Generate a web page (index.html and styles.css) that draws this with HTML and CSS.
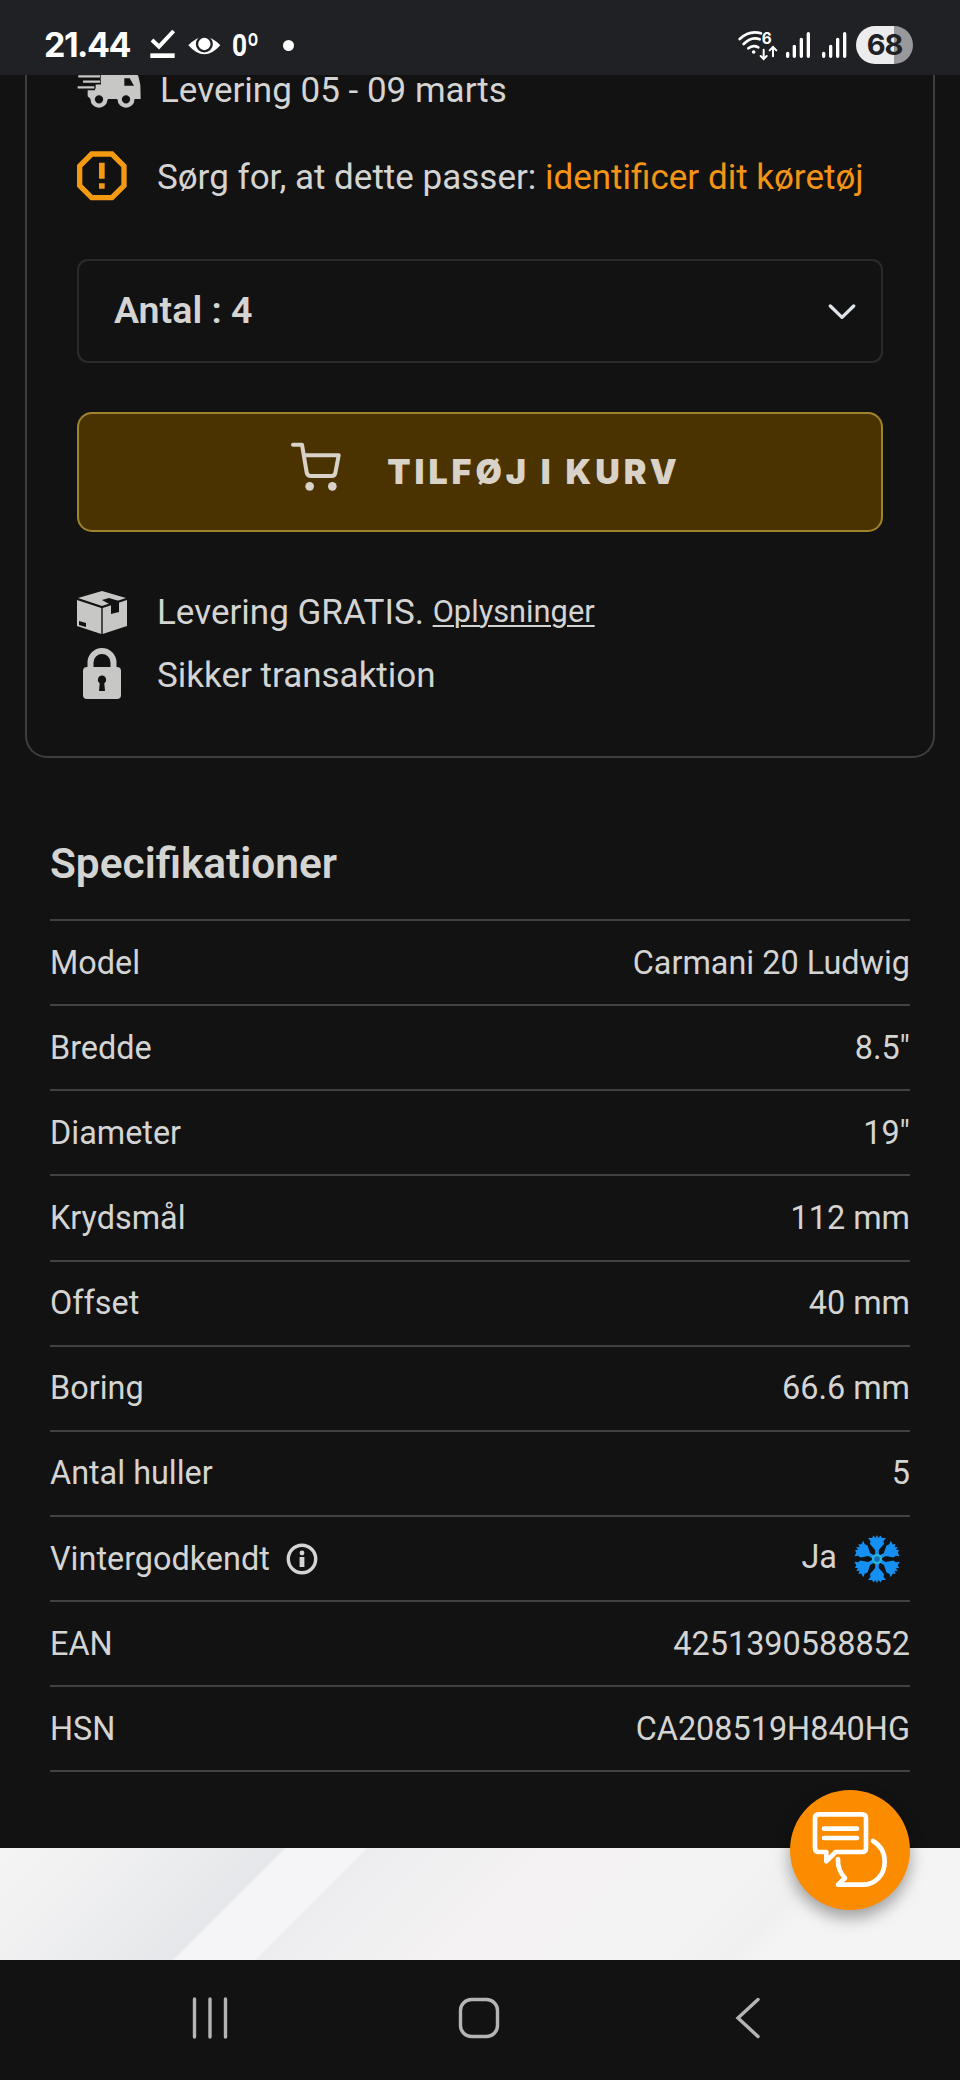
FILE: index.html
```html
<!DOCTYPE html>
<html lang="da">
<head>
<meta charset="utf-8">
<title>Carmani 20 Ludwig</title>
<link rel="stylesheet" href="styles.css">
</head>
<body>
<header class="status">
  <span class="clock">21.44</span>
  <svg class="st-check" width="26" height="32" viewBox="450 93 78 96" fill="none"><path d="M456 126L477 146L521 99" stroke="#fff" stroke-width="12"/><rect x="451" y="166" width="73" height="14" fill="#fff"/></svg>
  <svg class="st-eye" width="33" height="21" viewBox="563 105 99 63"><path d="M564 136Q612 84 660 136Q612 190 564 136Z" fill="#fff"/><circle cx="612" cy="132" r="22" fill="none" stroke="#202124" stroke-width="7"/></svg>
  <span class="temp">0º</span>
  <span class="dot"></span>
  <svg class="st-net" width="112" height="34" viewBox="770 84 336 102" fill="none" stroke="#fff" stroke-linecap="round">
    <g stroke-width="8"><path d="M778 117Q808 89 842 100"/><path d="M790 132Q814 108 838 118"/><path d="M804 145Q818 133 834 142"/></g>
    <circle cx="820" cy="156" r="5.500" fill="#fff" stroke="none"/>
    <path d="M850 149V175M841 168L850 177L859 168M878 169V143M868 151L878 141L888 151" stroke-width="6"/>
    <path d="M922 160V169M942 139V169M963 118V169M984 101V169M1030 160V169M1051 139V169M1072 118V169M1093 101V169" stroke-width="10"/>
    <text x="844" y="131" class="wifi-gen">6</text>
  </svg>
  <span class="battery">68</span>
</header>

<main class="page">
  <section class="card">
    <div class="row row-ship">
      <svg class="truck" width="66" height="40" viewBox="234 210 198 120" fill="#c7c7c5"><path d="M304 210H404L418 228L424 255L425 297H392A29 29 0 0 1 354 297H327A29 29 0 0 1 275 297L266 289V266H290V250H304Z"/><path d="M236 228H306M252 246H306M236 263H288" stroke="#121212" stroke-width="15"/><path d="M238 229H304M252 245H304M236 262H286" stroke="#c7c7c5" stroke-width="7"/><path d="M376 257V235H392L405 257Z" fill="#121212"/><g fill="#121212" stroke="#c7c7c5" stroke-width="13"><circle cx="300" cy="298" r="19"/><circle cx="381" cy="298" r="19"/></g></svg>
      <span>Levering 05 - 09 marts</span>
    </div>
    <div class="row row-fit">
      <svg width="50" height="50" viewBox="231 455 150 150"><path d="M275 464H336L372 500V559L336 595H275L239 559V500Z" fill="none" stroke="#f39a12" stroke-width="16"/><path d="M297 490H314V538H297ZM297 552H314V568H297Z" fill="#f39a12"/></svg>
      <span>Sørg for, at dette passer: <a class="identify">identificer dit køretøj</a></span>
    </div>
    <div class="select"><span>Antal : 4</span>
      <svg width="28" height="17" viewBox="1042 218 84 51"><path d="M1049 227L1084 261L1119 227" fill="none" stroke="#dfe3ea" stroke-width="10" stroke-linecap="round" stroke-linejoin="round"/></svg>
    </div>
    <button class="buy">
      <svg width="50" height="49" viewBox="874 634 150 147"><g fill="none" stroke="#d8d2c8" stroke-width="12" stroke-linecap="round" stroke-linejoin="round"><path d="M880 642H907L921 725Q923 736 934 736H996Q1005 736 1007 727L1017 674H913"/></g><circle cx="930" cy="767" r="13" fill="#d8d2c8"/><circle cx="998" cy="767" r="13" fill="#d8d2c8"/></svg>
      <span>TILFØJ I KURV</span>
    </button>
    <div class="row row-free">
      <svg width="50" height="43" viewBox="0 0 50 43"><path d="M25 0L49 7L25 15L1 7Z" fill="#c7c7c5"/><path d="M0 9L24.3 17V43L0 35ZM25.7 17L50 9V35L25.7 43Z" fill="#c7c7c5"/><path d="M25 9L32 7L42 10V21L34 23V14Z" fill="#121212"/><path d="M2 30L9 32V36L2 34Z" fill="#121212"/></svg>
      <span>Levering GRATIS. <a class="info-link">Oplysninger</a></span>
    </div>
    <div class="row row-safe">
      <svg width="50" height="52" viewBox="0 0 50 52"><path d="M13.500 24V14.500A11.500 11.500 0 0 1 36.500 14.500V24" fill="none" stroke="#c7c7c5" stroke-width="6"/><rect x="6" y="19" width="38" height="32" rx="4" fill="#c7c7c5"/><path d="M25 27.500A4.300 4.300 0 0 1 27.300 35.300L28 43H22L22.700 35.300A4.300 4.300 0 0 1 25 27.500Z" fill="#121212"/></svg>
      <span>Sikker transaktion</span>
    </div>
  </section>

  <section class="specs">
    <h2>Specifikationer</h2>
    <dl>
      <div><dt>Model</dt><dd>Carmani 20 Ludwig</dd></div>
      <div><dt>Bredde</dt><dd>8.5"</dd></div>
      <div><dt>Diameter</dt><dd>19"</dd></div>
      <div><dt>Krydsmål</dt><dd>112 mm</dd></div>
      <div><dt>Offset</dt><dd>40 mm</dd></div>
      <div><dt>Boring</dt><dd>66.6 mm</dd></div>
      <div><dt>Antal huller</dt><dd>5</dd></div>
      <div><dt>Vintergodkendt<svg width="32" height="32" viewBox="0 0 32 32"><circle cx="16" cy="16" r="13.700" fill="none" stroke="#d4d4d2" stroke-width="3.400"/><circle cx="16" cy="10" r="2.400" fill="#d4d4d2"/><rect x="13.600" y="14" width="4.800" height="10" fill="#d4d4d2"/></svg></dt>
        <dd class="winter"><span>Ja</span><svg width="50" height="50" viewBox="-25 -25 50 50"><defs><path id="arm" d="M-1.800 -3V-9L-7 -15L-6.500 -18L-9 -21L-5 -21L-3.500 -23.500L-1.500 -21L0 -24L1.500 -21L3.500 -23.500L5 -21L9 -21L6.500 -18L7 -15L1.800 -9V-3Z"/></defs><g fill="#1590f2"><use href="#arm"/><use href="#arm" transform="rotate(60)"/><use href="#arm" transform="rotate(120)"/><use href="#arm" transform="rotate(180)"/><use href="#arm" transform="rotate(240)"/><use href="#arm" transform="rotate(300)"/></g><circle r="4" fill="#126fb4" stroke="#27b3d8" stroke-width="2.400"/></svg></dd></div>
      <div><dt>EAN</dt><dd>4251390588852</dd></div>
      <div><dt>HSN</dt><dd>CA208519H840HG</dd></div>
    </dl>
  </section>
</main>

<div class="banner"></div>

<nav class="nav">
  <svg width="36" height="42" viewBox="0 0 36 42"><path d="M2.500 2V40M18 2V40M33.500 2V40" stroke="#b4b4b4" stroke-width="3.400" stroke-linecap="round"/></svg>
  <svg class="home" width="42" height="42" viewBox="0 0 42 42"><rect x="2.500" y="2.500" width="37" height="37" rx="11" fill="none" stroke="#b4b4b4" stroke-width="3.400"/></svg>
  <svg width="26" height="42" viewBox="0 0 26 42"><path d="M23 2.500L3 21L23 39.500" fill="none" stroke="#b4b4b4" stroke-width="3.400" stroke-linecap="round"/></svg>
</nav>

<button class="chat"><svg width="120" height="120" viewBox="270 150 360 360" fill="none" stroke="#fff" stroke-width="14" stroke-linecap="round" stroke-linejoin="round"><path d="M357 223H486Q498 223 498 235V324Q498 336 486 336H407L379 364V336H357Q345 336 345 324V235Q345 223 357 223ZM372 266H471M372 294H471"/><path d="M519 303C543 317 554 339 554 365C554 404 526 434 488 434H414L435 414Q412 390 414 357"/></svg></button>
</body>
</html>
```
FILE: styles.css
```css
* { box-sizing: border-box; }
body {
  margin: 0;
  width: 960px;
  height: 2080px;
  overflow: hidden;
  background: #121212;
  color: #d4d4d2;
  font-family: Roboto, sans-serif;
  font-size: 35px;
}
svg { display: block; flex: none; }
button { border: 0; padding: 0; margin: 0; font: inherit; color: inherit; }

.status {
  position: relative;
  z-index: 1;
  display: flex;
  align-items: center;
  height: 75px;
  padding: 15px 47px 0 44px;
  background: #202124;
  color: #fff;
  white-space: nowrap;
}
.clock { width: 87px; font: 700 34px/34px Inter, sans-serif; letter-spacing: -1.5px; }
.st-check { margin-left: 19px; }
.st-eye { margin-left: 12px; }
.temp { width: 28px; margin-left: 11px; font: 700 32px/34px Roboto, sans-serif; transform: scaleX(0.82); transform-origin: left; }
.dot { width: 11px; height: 11px; margin-left: 23px; border-radius: 50%; background: #fff; }
.st-net { margin-left: auto; }
.wifi-gen { font: 700 46px Inter, sans-serif; fill: #fff; stroke: none; }
.battery {
  width: 57px;
  height: 38px;
  margin-left: 7px;
  border-radius: 19px;
  background: linear-gradient(90deg, #ececee 38px, #98989d 38px);
  color: #202124;
  font: 700 29px/38px Inter, sans-serif;
  letter-spacing: -1px;
  text-align: center;
}

.page { display: flow-root; height: 1773px; }
.card {
  display: flex;
  flex-direction: column;
  margin: -5px 25px 0;
  padding: 0 50px 54px;
  border: 2px solid #3e3e3e;
  border-top: 0;
  border-radius: 0 0 22px 22px;
}
.row { display: flex; align-items: center; gap: 30px; white-space: nowrap; }
.row-ship { height: 40px; gap: 17px; }
.row-fit { height: 50px; margin-top: 41px; }
.row-fit span { padding-top: 2px; }
.identify { color: #f39416; }
.select {
  display: flex;
  align-items: center;
  justify-content: space-between;
  height: 104px;
  margin-top: 58px;
  padding: 0 25px 0 35px;
  border: 2px solid #2b2b2b;
  border-radius: 11px;
  font-size: 37.6px;
  font-weight: 600;
}
.select span { padding-bottom: 2px; }
.buy {
  display: flex;
  align-items: center;
  justify-content: center;
  gap: 46px;
  height: 120px;
  margin-top: 49px;
  padding-left: 12px;
  border: 2px solid #a08528;
  border-radius: 15px;
  background: #4a3300;
  color: #d8d2c8;
  font: 900 34px/40px Inter, sans-serif;
  letter-spacing: 4px;
  white-space: nowrap;
}
.buy svg { margin-top: -12px; }
.row-free { height: 50px; margin-top: 55px; }
.info-link {
  position: relative;
  top: -2px;
  font-size: 30.8px;
  text-decoration: underline;
  text-decoration-thickness: 2px;
  text-underline-offset: 3px;
}
.row-safe { height: 56px; margin-top: 9px; }
.row-safe span { padding-top: 2px; }

.specs { margin: 81px 50px 0; }
.specs h2 { margin: 0 0 30px; font-size: 42.4px; line-height: 50px; font-weight: 600; }
.specs dl { margin: 0; border-top: 2px solid #414141; font-size: 32.4px; }
.specs dl > div {
  display: flex;
  align-items: center;
  justify-content: space-between;
  height: 85.15px;
  border-bottom: 2px solid #414141;
}
.specs dt, .specs dd { display: flex; align-items: center; margin: 0; }
.specs dt svg { margin-left: 16px; }
.winter { gap: 15px; padding-right: 8px; }
.winter span { padding-bottom: 3px; }

.banner {
  height: 112px;
  background: linear-gradient(135deg, #f5f4f5 0, #f1f1f2 70px, #e5e7ea 200px, #f5f4f6 203px, #f5f4f6 258px, #ededef 261px, #f4f2f3 390px, #f4f3f4 540px, #f0f0f0 595px, #f5f4f5 615px, #f5f4f5);
}
.nav {
  display: flex;
  align-items: center;
  justify-content: space-between;
  height: 120px;
  padding: 0 199px 4px 192px;
}
.home { margin-left: -6px; }
.chat {
  position: absolute;
  left: 790px;
  top: 1790px;
  width: 120px;
  height: 120px;
  border-radius: 50%;
  background: #fb8c00;
  box-shadow: 0 8px 16px rgba(0, 0, 0, 0.35);
}
```
